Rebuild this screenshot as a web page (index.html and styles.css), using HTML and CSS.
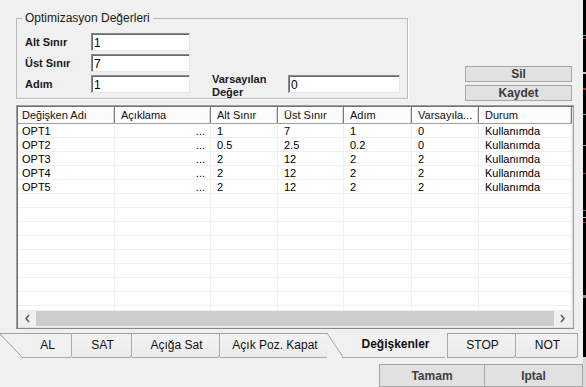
FILE: index.html
```html
<!DOCTYPE html>
<html lang="tr">
<head>
<meta charset="utf-8">
<title>Optimizasyon</title>
<link rel="stylesheet" href="styles.css">
</head>
<body>
<div class="window">
  <div class="main">
    <div class="top">
      <div class="groupbox">
        <span class="legend">Optimizasyon Değerleri</span>
        <div class="form">
          <label class="lbl">Alt Sınır</label>
          <input class="field" type="text" value="1">
          <span></span><span></span><span></span>
          <label class="lbl">Üst Sınır</label>
          <input class="field" type="text" value="7">
          <span></span><span></span><span></span>
          <label class="lbl">Adım</label>
          <input class="field" type="text" value="1">
          <span></span>
          <label class="lbl lbl-two">Varsayılan<br>Değer</label>
          <input class="field" type="text" value="0">
        </div>
      </div>
      <div class="side">
        <button class="btn">Sil</button>
        <button class="btn">Kaydet</button>
      </div>
    </div>

    <div class="list">
      <div class="head">
        <div class="hc first">Değişken Adı</div>
        <div class="hc">Açıklama</div>
        <div class="hc">Alt Sınır</div>
        <div class="hc">Üst Sınır</div>
        <div class="hc">Adım</div>
        <div class="hc">Varsayıla...</div>
        <div class="hc">Durum</div>
      </div>
      <div class="rows">
        <div class="row"><div class="c first">OPT1</div><div class="c dots">...</div><div class="c">1</div><div class="c">7</div><div class="c">1</div><div class="c">0</div><div class="c">Kullanımda</div></div>
        <div class="row"><div class="c first">OPT2</div><div class="c dots">...</div><div class="c">0.5</div><div class="c">2.5</div><div class="c">0.2</div><div class="c">0</div><div class="c">Kullanımda</div></div>
        <div class="row"><div class="c first">OPT3</div><div class="c dots">...</div><div class="c">2</div><div class="c">12</div><div class="c">2</div><div class="c">2</div><div class="c">Kullanımda</div></div>
        <div class="row"><div class="c first">OPT4</div><div class="c dots">...</div><div class="c">2</div><div class="c">12</div><div class="c">2</div><div class="c">2</div><div class="c">Kullanımda</div></div>
        <div class="row"><div class="c first">OPT5</div><div class="c dots">...</div><div class="c">2</div><div class="c">12</div><div class="c">2</div><div class="c">2</div><div class="c">Kullanımda</div></div>
        <div class="row"><div class="c"></div><div class="c"></div><div class="c"></div><div class="c"></div><div class="c"></div><div class="c"></div><div class="c"></div></div>
        <div class="row"><div class="c"></div><div class="c"></div><div class="c"></div><div class="c"></div><div class="c"></div><div class="c"></div><div class="c"></div></div>
        <div class="row"><div class="c"></div><div class="c"></div><div class="c"></div><div class="c"></div><div class="c"></div><div class="c"></div><div class="c"></div></div>
        <div class="row"><div class="c"></div><div class="c"></div><div class="c"></div><div class="c"></div><div class="c"></div><div class="c"></div><div class="c"></div></div>
        <div class="row"><div class="c"></div><div class="c"></div><div class="c"></div><div class="c"></div><div class="c"></div><div class="c"></div><div class="c"></div></div>
        <div class="row"><div class="c"></div><div class="c"></div><div class="c"></div><div class="c"></div><div class="c"></div><div class="c"></div><div class="c"></div></div>
        <div class="row"><div class="c"></div><div class="c"></div><div class="c"></div><div class="c"></div><div class="c"></div><div class="c"></div><div class="c"></div></div>
        <div class="row"><div class="c"></div><div class="c"></div><div class="c"></div><div class="c"></div><div class="c"></div><div class="c"></div><div class="c"></div></div>
        <div class="row"><div class="c"></div><div class="c"></div><div class="c"></div><div class="c"></div><div class="c"></div><div class="c"></div><div class="c"></div></div>
      </div>
      <div class="hscroll">
        <span class="arrow">
          <svg width="7" height="9" viewBox="0 0 7 9"><path d="M5 1 L2 4.5 L5 8" fill="none" stroke="#606060" stroke-width="1.6"/></svg>
        </span>
        <span class="thumb"></span>
        <span class="arrow">
          <svg width="7" height="9" viewBox="0 0 7 9"><path d="M2 1 L5 4.5 L2 8" fill="none" stroke="#606060" stroke-width="1.6"/></svg>
        </span>
      </div>
    </div>

    <div class="tabs">
      <div class="tab tab-first">AL</div>
      <div class="tab" style="width:60px">SAT</div>
      <div class="tab" style="width:88px">Açığa Sat</div>
      <div class="tab tab-before" style="width:122px">Açık Poz. Kapat</div>
      <div class="tab tab-active">Değişkenler</div>
      <div class="tab" style="width:68px">STOP</div>
      <div class="tab" style="width:62px">NOT</div>
    </div>

    <div class="bottom">
      <button class="bbtn tamam">Tamam</button>
      <button class="bbtn iptal">Iptal</button>
    </div>
  </div>
  <div class="edge"></div>
</div>
</body>
</html>
```
FILE: styles.css
```css
* { box-sizing: border-box; }

html, body {
  margin: 0;
  padding: 0;
  width: 586px;
  height: 387px;
  overflow: hidden;
  background: #f0f0f0;
  font-family: "Liberation Sans", Arial, sans-serif;
  color: #111;
}

.window {
  display: flex;
  width: 586px;
  height: 387px;
}

.main {
  width: 583px;
  height: 387px;
  display: flex;
  flex-direction: column;
}

.edge {
  width: 3px;
  height: 387px;
  background: linear-gradient(to bottom,
    #000 0 35px, #20c8d0 35px 36px, #000 36px 38px, #d01818 38px 39px,
    #000 39px 72px, #c8c8c8 72px 74px, #000 74px 88px, #d01818 88px 90px,
    #000 90px 114px, #20c8d0 114px 115px, #000 115px 145px, #a0a0a0 145px 146px,
    #000 146px 173px, #d01818 173px 174px, #000 174px 210px, #18a018 210px 211px,
    #000 211px 217px, #c8c8c8 217px 218px, #000 218px 222px, #d01818 222px 223px,
    #000 223px 295px, #909090 295px 298px, #000 298px 357px, #d8d8d8 357px 387px);
}

/* ---------- top area ---------- */
.top {
  display: flex;
  align-items: flex-start;
  height: 101px;
}

.groupbox {
  position: relative;
  margin: 18px 0 0 16px;
  width: 392px;
  height: 81px;
  border: 1px solid #b9b9b9;
  box-shadow: 1px 1px 0 #fff;
  padding: 14px 0 0 8px;
}

.legend {
  position: absolute;
  left: 5px;
  top: -8px;
  padding: 0 3px;
  background: #f0f0f0;
  font-size: 12px;
  line-height: 14px;
  color: #1a1a1a;
}

.form {
  display: grid;
  grid-template-columns: 66px 99px 22px 76px 112px;
  grid-template-rows: 18px 18px 18px;
  row-gap: 3px;
  align-items: center;
}

.lbl {
  font-size: 11px;
  font-weight: bold;
  color: #1a1a1a;
  line-height: 13px;
}

.lbl-two {
  align-self: start;
  margin-top: -2px;
  line-height: 13px;
}

.field {
  width: 100%;
  height: 18px;
  margin: 0;
  padding: 1px 2px 0 2px;
  font-family: "Liberation Sans", Arial, sans-serif;
  font-size: 12px;
  color: #000;
  background: #fff;
  border: 1px solid;
  border-color: #8a8a8a #e6e6e6 #e6e6e6 #8a8a8a;
  box-shadow: inset 1px 1px 0 #6a6a6a;
  outline: none;
}

.side {
  display: flex;
  flex-direction: column;
  gap: 3px;
  margin: 66px 0 0 57px;
}

.btn {
  width: 107px;
  height: 16px;
  margin: 0;
  padding: 0;
  border: 1px solid #a6a6a6;
  background: #e1e1e1;
  font-family: "Liberation Sans", Arial, sans-serif;
  font-size: 12px;
  font-weight: bold;
  line-height: 14px;
  color: #3a3a3a;
}

/* ---------- list ---------- */
.list {
  margin: 4px 0 0 16px;
  width: 558px;
  height: 224px;
  border: 1px solid;
  border-color: #a0a0a0 #a0a0a0 #8a8a8a #a0a0a0;
  box-shadow: inset 1px 1px 0 #6e6e6e, inset -1px -1px 0 #e3e3e3;
  padding: 1px;
  display: flex;
  flex-direction: column;
  background: #fff;
}

.head, .row {
  display: grid;
  grid-template-columns: 97px 96px 67px 66px 68px 67px 93px;
}

.head {
  height: 17px;
  background: #fbfbfb;
  border-bottom: 1px solid #a0a0a0;
}

.hc {
  font-size: 11px;
  line-height: 16px;
  padding-left: 6px;
  border-right: 1px solid #7a7a7a;
  box-shadow: inset 1px 1px 0 #fff, inset -1px 0 0 #d8d8d8;
  white-space: nowrap;
  overflow: hidden;
}

.hc.first { padding-left: 4px; }

.rows {
  height: 186px;
  overflow: hidden;
}

.row { height: 14px; }

.c {
  font-size: 11px;
  line-height: 14px;
  padding-left: 6px;
  border-right: 1px solid #f0f0f0;
  border-bottom: 1px solid #f0f0f0;
  white-space: nowrap;
  overflow: hidden;
  color: #000;
}

.c.first { padding-left: 4px; }

.c.dots {
  text-align: right;
  padding-right: 5px;
}

.hscroll {
  height: 17px;
  display: flex;
  align-items: center;
  background: #f0f0f0;
  padding: 0 1px;
}

.arrow {
  width: 17px;
  height: 15px;
  display: flex;
  align-items: center;
  justify-content: center;
}

.thumb {
  flex: 1;
  height: 15px;
  background: #cdcdcd;
}

/* ---------- tabs ---------- */
.tabs {
  display: flex;
  margin-top: 4px;
  height: 25px;
  width: 578px;
}

.tab {
  position: relative;
  height: 25px;
  border-top: 1px solid #a0a0a0;
  border-right: 1px solid #a9a9a9;
  border-bottom: 1px solid #a9a9a9;
  border-bottom-right-radius: 3px;
  background: linear-gradient(#f3f3f3, #ebebeb);
  font-size: 12px;
  line-height: 22px;
  text-align: center;
  padding-left: 2px;
  color: #111;
  white-space: nowrap;
}

.tab-first {
  width: 72px;
  padding-left: 24px;
  border-bottom: none;
  background: transparent;
}

.tab-first::before,
.tab-active::before {
  content: "";
  position: absolute;
  left: 0;
  top: 0;
  width: 23px;
  height: 24px;
  background: linear-gradient(to top right,
    transparent calc(50% - 0.8px), #a0a0a0 50%, transparent calc(50% + 0.8px));
}

.tab-first::after {
  content: "";
  position: absolute;
  left: 22px;
  right: 0;
  bottom: 0;
  height: 1px;
  background: #a9a9a9;
}

.tab-before {
  padding-right: 14px;
  border-right: none;
}

.tab-active {
  width: 121px;
  margin-left: -15px;
  padding-left: 17px;
  border-top: none;
  border-bottom: none;
  background: #f0f0f0;
  font-weight: bold;
  line-height: 23px;
  z-index: 1;
  border-bottom-right-radius: 0;
}

.tab-active::before {
  width: 16px;
}

.tab-active::after {
  content: "";
  position: absolute;
  left: 15px;
  right: 2px;
  bottom: 0;
  height: 1px;
  background: #a9a9a9;
}

/* ---------- bottom buttons ---------- */
.bottom {
  display: flex;
  justify-content: flex-end;
  margin-top: 6px;
}

.bbtn {
  height: 23px;
  margin: 0;
  padding: 0;
  border: 1px solid #a6a6a6;
  background: #e1e1e1;
  font-family: "Liberation Sans", Arial, sans-serif;
  font-size: 12px;
  font-weight: bold;
  color: #404040;
  line-height: 20px;
}

.tamam { width: 106px; }
.iptal { width: 98px; border-left: none; }
```
